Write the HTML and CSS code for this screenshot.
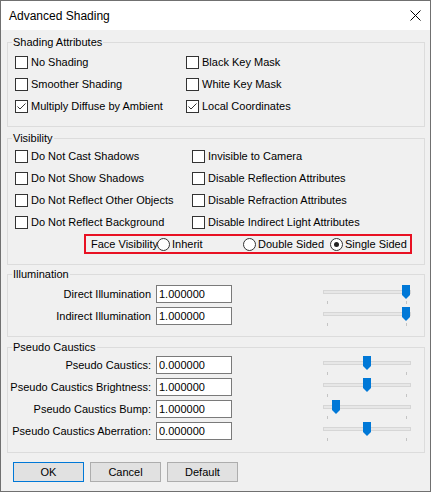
FILE: index.html
```html
<!DOCTYPE html>
<html>
	<head>
		<meta charset="utf-8">
		<title>Advanced Shading</title>
		<link rel="stylesheet" href="styles.css">
	</head>
	<body>
		<div class="dialog">
			<div class="titlebar">
				<span>Advanced Shading</span>
				<svg class="close" width="11" height="11" viewBox="0 0 11 11"><path d="M0.5 0.5 L10.5 10.5 M10.5 0.5 L0.5 10.5" stroke="#000" stroke-width="1" fill="none"/></svg>
			</div>
			<div class="content">
				<fieldset class="group g1">
					<legend>Shading Attributes</legend>
					<div class="checks">
						<label class="check"><span class="box"></span>No Shading</label>
						<label class="check"><span class="box"></span>Black Key Mask</label>
						<label class="check"><span class="box"></span>Smoother Shading</label>
						<label class="check"><span class="box"></span>White Key Mask</label>
						<label class="check"><span class="box"><svg width="11" height="11" viewBox="0 0 11 11"><polyline points="1.5,5.5 4,8 9.5,2.5" stroke="#333" stroke-width="1" fill="none"/></svg></span>Multiply Diffuse by Ambient</label>
						<label class="check"><span class="box"><svg width="11" height="11" viewBox="0 0 11 11"><polyline points="1.5,5.5 4,8 9.5,2.5" stroke="#333" stroke-width="1" fill="none"/></svg></span>Local Coordinates</label>
					</div>
				</fieldset>

				<fieldset class="group g2">
					<legend>Visibility</legend>
					<div class="checks vis">
						<label class="check"><span class="box"></span>Do Not Cast Shadows</label>
						<label class="check"><span class="box"></span>Invisible to Camera</label>
						<label class="check"><span class="box"></span>Do Not Show Shadows</label>
						<label class="check"><span class="box"></span>Disable Reflection Attributes</label>
						<label class="check"><span class="box"></span>Do Not Reflect Other Objects</label>
						<label class="check"><span class="box"></span>Disable Refraction Attributes</label>
						<label class="check"><span class="box"></span>Do Not Reflect Background</label>
						<label class="check"><span class="box"></span>Disable Indirect Light Attributes</label>
					</div>
					<div class="face">
						<span class="face-label">Face Visibility</span>
						<label class="opt inh"><span class="radio"></span>Inherit</label>
						<label class="opt dbl"><span class="radio"></span>Double Sided</label>
						<label class="opt"><span class="radio on"></span>Single Sided</label>
					</div>
				</fieldset>

				<fieldset class="group g3">
					<legend>Illumination</legend>
					<div class="srow">
						<span class="lbl">Direct Illumination</span>
						<input class="num" type="text" value="1.000000">
						<div class="slider"><div class="track"></div><span class="tick t1"></span><span class="tick t2"></span><svg class="thumb" style="left:79px" width="9" height="14" viewBox="0 0 9 14"><path d="M0 0 H8 V10 L4 14 L0 10 Z" fill="#0078d7"/></svg></div>
					</div>
					<div class="srow">
						<span class="lbl">Indirect Illumination</span>
						<input class="num" type="text" value="1.000000">
						<div class="slider"><div class="track"></div><span class="tick t1"></span><span class="tick t2"></span><svg class="thumb" style="left:79px" width="9" height="14" viewBox="0 0 9 14"><path d="M0 0 H8 V10 L4 14 L0 10 Z" fill="#0078d7"/></svg></div>
					</div>
				</fieldset>

				<fieldset class="group g4">
					<legend>Pseudo Caustics</legend>
					<div class="srow">
						<span class="lbl">Pseudo Caustics:</span>
						<input class="num" type="text" value="0.000000">
						<div class="slider"><div class="track"></div><span class="tick t1"></span><span class="tick t2"></span><svg class="thumb" style="left:40px" width="9" height="14" viewBox="0 0 9 14"><path d="M0 0 H8 V10 L4 14 L0 10 Z" fill="#0078d7"/></svg></div>
					</div>
					<div class="srow">
						<span class="lbl">Pseudo Caustics Brightness:</span>
						<input class="num" type="text" value="1.000000">
						<div class="slider"><div class="track"></div><span class="tick t1"></span><span class="tick t2"></span><svg class="thumb" style="left:40px" width="9" height="14" viewBox="0 0 9 14"><path d="M0 0 H8 V10 L4 14 L0 10 Z" fill="#0078d7"/></svg></div>
					</div>
					<div class="srow">
						<span class="lbl">Pseudo Caustics Bump:</span>
						<input class="num" type="text" value="1.000000">
						<div class="slider"><div class="track"></div><span class="tick t1"></span><span class="tick t2"></span><svg class="thumb" style="left:9px" width="9" height="14" viewBox="0 0 9 14"><path d="M0 0 H8 V10 L4 14 L0 10 Z" fill="#0078d7"/></svg></div>
					</div>
					<div class="srow">
						<span class="lbl">Pseudo Caustics Aberration:</span>
						<input class="num" type="text" value="0.000000">
						<div class="slider"><div class="track"></div><span class="tick t1"></span><span class="tick t2"></span><svg class="thumb" style="left:40px" width="9" height="14" viewBox="0 0 9 14"><path d="M0 0 H8 V10 L4 14 L0 10 Z" fill="#0078d7"/></svg></div>
					</div>
				</fieldset>

				<div class="buttons">
					<div class="btn default">OK</div>
					<div class="btn">Cancel</div>
					<div class="btn">Default</div>
				</div>
			</div>
		</div>
	</body>
</html>
```

FILE: styles.css
```css
body{
	margin:0;
	background:#f0f0f0;
}

.dialog{
	width:431px;
	height:492px;
	box-sizing:border-box;
	border:1px solid #707070;
	background:#f0f0f0;
	font-family:"Liberation Sans", Arial, sans-serif;
	font-size:11px;
	color:#000;
	overflow:hidden;
}

.titlebar{
	height:29px;
	background:#fff;
	display:flex;
	align-items:center;
	justify-content:space-between;
	padding:0 9px 0 8px;
	font-size:12px;
}

.content{
	padding:5px 5px 0 6px;
}

.group{
	margin:0;
	padding:0 0 9px 0;
	border:1px solid #dcdcdc;
	min-width:0;
}

.group legend{
	margin-left:4px;
	padding:0 1px;
	line-height:14px;
}

.g2{
	margin-top:4px;
	padding-bottom:10px;
}

.g3{
	margin-top:2px;
}

.g4{
	margin-top:3px;
	padding-bottom:10px;
}

/* checkbox grids */
.checks{
	display:grid;
	grid-template-columns:171px 1fr;
	grid-auto-rows:22px;
	padding:2px 0 0 7px;
}

.checks.vis{
	grid-template-columns:177px 1fr;
	padding-top:0;
}

.check{
	display:flex;
	align-items:center;
	gap:3px;
	white-space:nowrap;
}

.box{
	width:13px;
	height:13px;
	box-sizing:border-box;
	border:1px solid #333;
	background:#fff;
	display:flex;
	align-items:center;
	justify-content:center;
	flex:none;
}

/* face visibility */
.face{
	margin:1px 0 0 76px;
	width:328px;
	height:20px;
	box-sizing:border-box;
	border:2px solid #e81123;
	display:flex;
	align-items:center;
	padding-left:5px;
	white-space:nowrap;
}

.face-label{
	width:66px;
}

.opt{
	display:flex;
	align-items:center;
	gap:2px;
}

.opt.inh{
	width:86px;
}

.opt.dbl{
	width:87px;
}

.radio{
	width:13px;
	height:13px;
	box-sizing:border-box;
	border:1px solid #333;
	border-radius:50%;
	background:#fff;
	display:flex;
	align-items:center;
	justify-content:center;
	flex:none;
}

.radio.on::after{
	content:"";
	width:5px;
	height:5px;
	border-radius:50%;
	background:#222;
}

/* slider rows */
.srow{
	display:grid;
	grid-template-columns:143px 76px 88px;
	column-gap:5px;
	height:22px;
	align-items:center;
}

.g3 .srow:first-child, .g3 legend + .srow{
	margin-top:2px;
}

.lbl{
	text-align:right;
	white-space:nowrap;
}

.num{
	height:18px;
	box-sizing:border-box;
	border:1px solid #7a7a7a;
	background:#fff;
	padding:0 2px;
	margin:0;
	font-family:inherit;
	font-size:11px;
	color:#000;
	outline:none;
}

.slider{
	position:relative;
	width:88px;
	height:22px;
	margin-left:86px;
}

.track{
	position:absolute;
	left:0;
	right:0;
	top:7px;
	height:4px;
	box-sizing:border-box;
	background:#e7e7e7;
	border:1px solid #d6d6d6;
}

.tick{
	position:absolute;
	top:18px;
	width:1px;
	height:3px;
	background:#c4c4c4;
}

.tick.t1{
	left:4px;
}

.tick.t2{
	left:83px;
}

.thumb{
	position:absolute;
	top:2px;
}

/* buttons */
.buttons{
	display:flex;
	gap:6px;
	margin:9px 0 0 6px;
}

.btn{
	width:71px;
	height:20px;
	box-sizing:border-box;
	border:1px solid #adadad;
	background:#e1e1e1;
	text-align:center;
	line-height:18px;
}

.btn.default{
	border-color:#0078d7;
}
```
